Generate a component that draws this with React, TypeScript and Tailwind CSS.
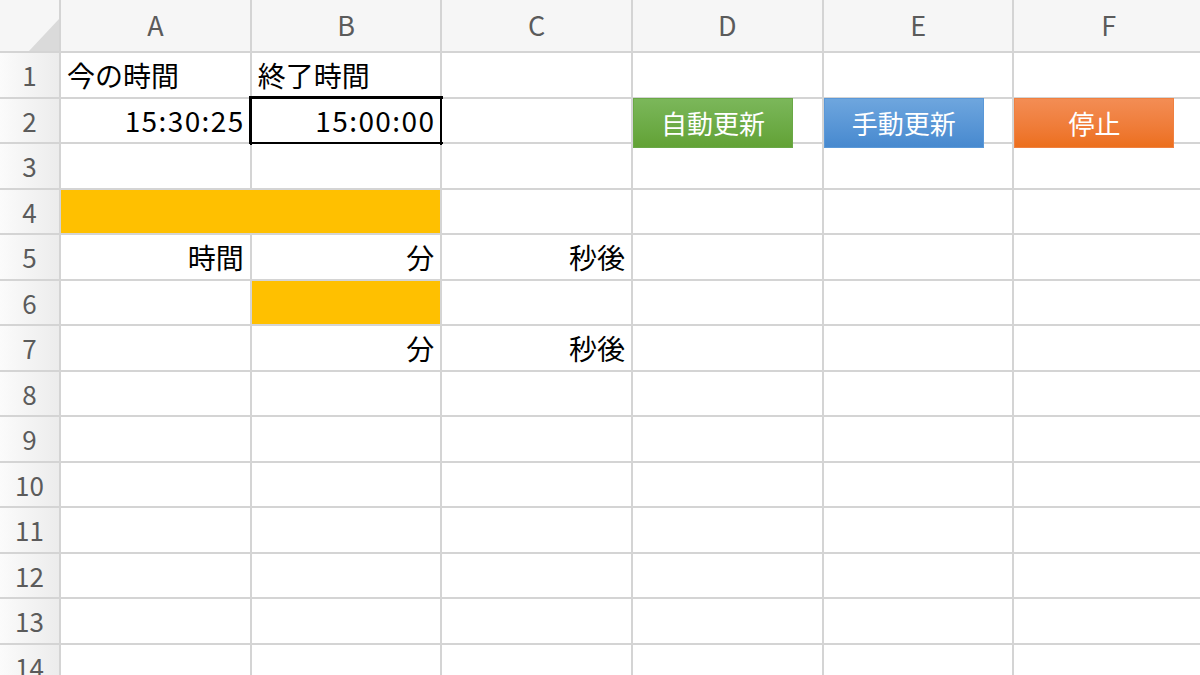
import React from 'react';

const COLS = ['A', 'B', 'C', 'D', 'E', 'F'];
const ROWS = Array.from({ length: 14 }, (_, i) => i + 1);

type Cell = { text?: string; align?: 'left' | 'right'; fill?: boolean; span?: number; selected?: boolean; num?: boolean };

// sheet contents, keyed by "A1" style refs
const cells: Record<string, Cell> = {
  A1: { text: '今の時間', align: 'left' },
  B1: { text: '終了時間', align: 'left' },
  A2: { text: '15:30:25', align: 'right', num: true },
  B2: { text: '15:00:00', align: 'right', num: true, selected: true },
  A4: { fill: true, span: 2 },
  A5: { text: '時間', align: 'right' },
  B5: { text: '分', align: 'right' },
  C5: { text: '秒後', align: 'right' },
  B6: { fill: true },
  B7: { text: '分', align: 'right' },
  C7: { text: '秒後', align: 'right' },
};

const buttons: Record<string, { label: string; cls: string }> = {
  D2: { label: '自動更新', cls: 'bg-gradient-to-b from-[#7bb75a] to-[#62a235] border-[#6aa846]' },
  E2: { label: '手動更新', cls: 'bg-gradient-to-b from-[#6ea6de] to-[#4789cf] border-[#5a98d8]' },
  F2: { label: '停止', cls: 'bg-gradient-to-b from-[#f38d54] to-[#ec6f1c] border-[#f08040]' },
};

const font = { fontFamily: '"Noto Sans CJK JP", "Noto Sans", sans-serif' };

export default function App() {
  return (
    <div className="w-[1200px] h-[675px] overflow-hidden bg-white" style={font}>
      <div className="grid grid-cols-[59px_repeat(7,188.7px)] grid-rows-[51px_repeat(14,43.5px)] gap-[2px] bg-[#d4d4d4] w-max">
        {/* corner */}
        <div className="bg-[#f6f6f6] flex items-end justify-end">
          <svg width="30" height="32" viewBox="0 0 30 32">
            <polygon points="0,32 30,0 30,32" fill="#dadada" />
          </svg>
        </div>
        {[...COLS, ''].map((c, i) => (
          <div key={i} className="bg-[#f6f6f6] flex items-center justify-center text-[27px] text-[#5b5b5b]">
            {c}
          </div>
        ))}

        {ROWS.map((r) => {
          const out: React.ReactNode[] = [];
          out.push(
            <div key={`h${r}`} className="bg-gradient-to-r from-[#fbfbfb] to-[#ececec] flex items-center justify-center text-[26px] text-[#5b5b5b]">
              {r}
            </div>
          );
          let skip = 0;
          [...COLS, 'G'].forEach((c) => {
            if (skip > 0) { skip--; return; }
            const ref = `${c}${r}`;
            const cell = cells[ref];
            const btn = buttons[ref];
            if (cell?.span) skip = cell.span - 1;
            out.push(
              <div
                key={ref}
                className={`flex text-[28px] text-black leading-none whitespace-nowrap ${
                  btn ? 'items-start' : cell?.num ? 'items-center pl-[6px] pr-[5px]' : 'items-center px-[6px]'
                } ${cell?.fill ? 'bg-[#ffc000]' : 'bg-white'} ${
                  cell?.align === 'right' ? 'justify-end' : 'justify-start'
                } ${cell?.selected ? 'outline-solid outline-[3px] outline-black' : ''} ${
                  cell?.span === 2 ? 'col-span-2' : ''
                } ${cell?.num ? 'tracking-[1.4px]' : ''}`}
              >
                {cell?.text}
                {btn && (
                  <div className={`relative z-10 -mt-[1px] h-[50px] w-[160px] border flex items-center justify-center text-white text-[26px] ${btn.cls}`}>
                    {btn.label}
                  </div>
                )}
              </div>
            );
          });
          return out;
        })}
      </div>
    </div>
  );
}
